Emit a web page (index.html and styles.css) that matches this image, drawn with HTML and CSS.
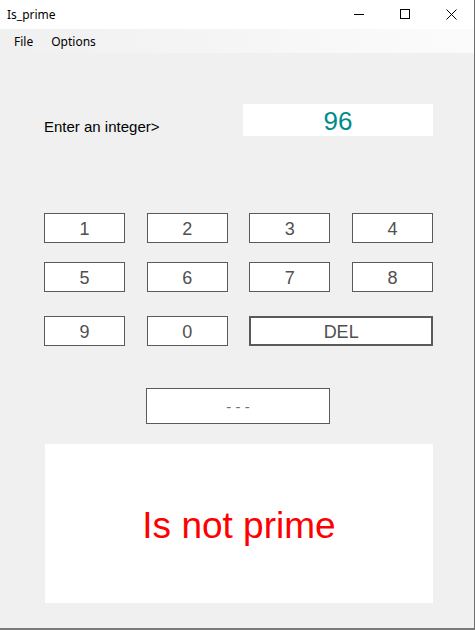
FILE: index.html
```html
<!DOCTYPE html>
<html>
<head>
<meta charset="utf-8">
<link rel="stylesheet" href="styles.css">
</head>
<body>
<div class="window">
  <div class="titlebar">
    <span class="title">Is_prime</span>
    <div class="controls">
      <span class="ctl"><svg width="10" height="10" viewBox="0 0 10 10"><path d="M0 5.5H10" stroke="#000" stroke-width="1"/></svg></span>
      <span class="ctl"><svg width="10" height="10" viewBox="0 0 10 10"><rect x="0.5" y="0.5" width="9" height="9" fill="none" stroke="#000" stroke-width="1"/></svg></span>
      <span class="ctl"><svg width="11" height="11" viewBox="0 0 11 11"><path d="M0.5 0.5L10.5 10.5M10.5 0.5L0.5 10.5" stroke="#000" stroke-width="1"/></svg></span>
    </div>
  </div>
  <div class="menubar">
    <span class="menu-item file">File</span>
    <span class="menu-item">Options</span>
  </div>
  <div class="content">
    <div class="input-row">
      <span class="label">Enter an integer&gt;</span>
      <div class="input">96</div>
    </div>
    <div class="keys">
      <div class="key-row">
        <button class="key">1</button>
        <button class="key">2</button>
        <button class="key">3</button>
        <button class="key">4</button>
      </div>
      <div class="key-row second">
        <button class="key">5</button>
        <button class="key">6</button>
        <button class="key">7</button>
        <button class="key">8</button>
      </div>
      <div class="key-row last">
        <button class="key">9</button>
        <button class="key">0</button>
        <button class="key del">DEL</button>
      </div>
    </div>
    <div class="check-wrap">
      <button class="check">- - -</button>
    </div>
    <div class="result">Is not prime</div>
  </div>
</div>
</body>
</html>
```
FILE: styles.css
```css
* { box-sizing: border-box; }
html, body { margin: 0; padding: 0; background: #f0f0f0; }
.window {
  width: 475px;
  height: 630px;
  background: #f0f0f0;
  border-right: 1px solid #6e6e6e;
  border-bottom: 2px solid #7a7a7a;
  display: flex;
  flex-direction: column;
  font-family: "Liberation Sans", Arial, sans-serif;
  overflow: hidden;
}
.titlebar {
  height: 29px;
  background: #ffffff;
  display: flex;
  align-items: center;
  justify-content: space-between;
}
.title {
  font-family: "Noto Sans", "Open Sans", sans-serif;
  font-size: 12px;
  color: #000;
  padding-left: 7px;
  padding-bottom: 1px;
}
.controls { display: flex; height: 29px; }
.ctl {
  width: 46px;
  height: 29px;
  display: flex;
  align-items: center;
  justify-content: center;
}
.ctl svg { display: block; margin-bottom: 1px; }
.menubar {
  height: 24px;
  background: linear-gradient(to right, #f0f0f0, #fbfbfb);
  display: flex;
  align-items: center;
  padding-left: 5px;
  font-family: "Noto Sans", "Open Sans", sans-serif;
  font-size: 12px;
  color: #000;
}
.menu-item { padding: 0 9px; }
.content {
  flex: 1;
  padding-left: 44px;
  padding-top: 51px;
}
.input-row {
  display: flex;
  align-items: flex-start;
  height: 32px;
}
.label {
  font-size: 15px;
  color: #000;
  width: 199px;
  margin-top: 14px;
  line-height: 17px;
}
.input {
  width: 190px;
  height: 32px;
  background: #fff;
  color: #008b8b;
  font-size: 26px;
  text-align: center;
  line-height: 34px;
}
.keys {
  margin-top: 77px;
  width: 389px;
  display: flex;
  flex-direction: column;
}
.key-row {
  display: grid;
  grid-template-columns: 81px 81px 81px 81px;
  column-gap: 21.67px;
  height: 30px;
  margin-bottom: 19px;
}
.key-row.second { margin-bottom: 24px; }
.key-row.last { margin-bottom: 0; }
.key {
  height: 30px;
  background: #fff;
  border: 1px solid #5a5a5a;
  font-family: "Liberation Sans", Arial, sans-serif;
  font-size: 18px;
  color: #505050;
  padding: 0;
  padding-top: 2px;
}
.key.del {
  grid-column: 3 / span 2;
  border: 2px solid #5a5a5a;
}
.check-wrap {
  margin-top: 42px;
  padding-left: 102px;
}
.check {
  width: 184px;
  height: 36px;
  background: #fff;
  border: 1px solid #5a5a5a;
  font-family: "Liberation Sans", Arial, sans-serif;
  font-size: 15px;
  color: #707070;
  padding: 0;
}
.result {
  margin-top: 20px;
  margin-left: 1px;
  width: 388px;
  height: 159px;
  background: #fff;
  color: #ff0000;
  font-size: 37px;
  display: flex;
  align-items: center;
  justify-content: center;
  padding-top: 4px;
}
```
